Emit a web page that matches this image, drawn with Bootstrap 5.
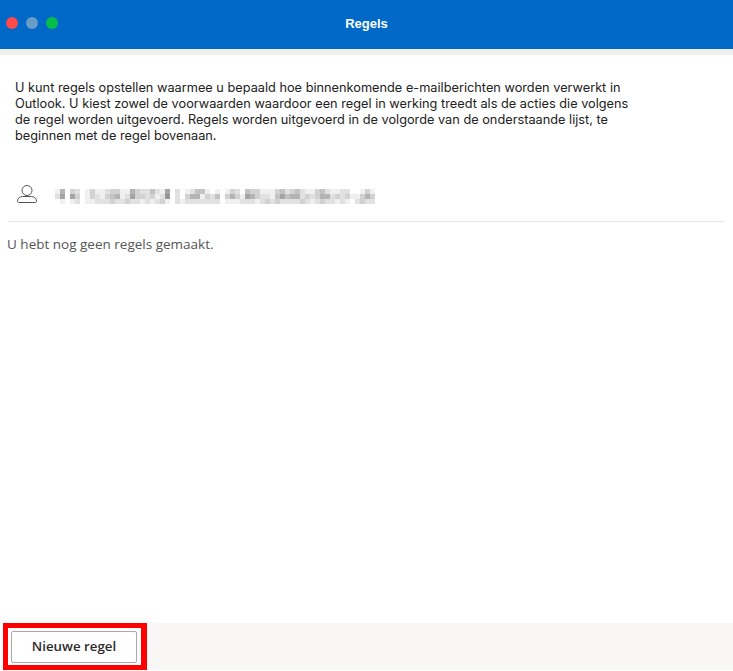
<!DOCTYPE html>
<html lang="nl">
<head>
<meta charset="utf-8">
<title>Regels</title>
<link href="https://cdn.jsdelivr.net/npm/bootstrap@5.3.0/dist/css/bootstrap.min.css" rel="stylesheet">
<style>
html,body{height:100%;background:#fff;overflow:hidden}
.win{height:671px}
.titlebar{height:49px;background:#0069c8;position:relative;padding-bottom:3px}
.dot-tl{width:12px;height:12px;border-radius:50%}
.tl-r{background:#fc4a4b}.tl-y{background:#6a9cc9}.tl-g{background:#06bf4b}
.tl-set{padding-left:6px;gap:8px}
.title-txt{font:700 13px/47px "Liberation Sans",sans-serif;color:#fff;position:absolute;left:0;right:0;top:0;text-align:center}
.strip{height:6px;background:#eeeeee}
.intro{font:400 12.75px/16px Inter,sans-serif;color:#222;padding:25px 0 0 15px;width:642px;margin:0}
.acct{height:55px;margin:23px 9px 0 8px;border-bottom:1px solid #e6e6e6;padding-left:9px;gap:18px}
.mosaic{display:block}
.empty{font:400 13.5px/16px "Open Sans",sans-serif;color:#555;padding:14px 0 0 7px;margin:0}
.bodyfill{min-height:0}
.foot{height:47px;margin-bottom:1px}
.foot-left{padding-left:3px;background:#fff}
.hl{border:solid #f00;border-width:5px 6px 5px 5px;width:144px;height:47px;padding:3px;background:#fff}
.new-btn{width:126px;height:32px;background:#fff;border:1px solid #aaa8a6;border-radius:2px;font:600 13.3px/1 "Open Sans",sans-serif;color:#2b2b2b;padding:0}
.foot-rest{background:#f8f7f6}
</style>
</head>
<body>
<div class="win d-flex flex-column">
  <div class="titlebar d-flex align-items-center tl-set flex-shrink-0">
    <span class="dot-tl tl-r"></span><span class="dot-tl tl-y"></span><span class="dot-tl tl-g"></span>
    <div class="title-txt">Regels</div>
  </div>
  <div class="strip flex-shrink-0"></div>
  <div class="bodyfill flex-grow-1">
    <p class="intro">U kunt regels opstellen waarmee u bepaald hoe binnenkomende e-mailberichten worden verwerkt in Outlook. U kiest zowel de voorwaarden waardoor een regel in werking treedt als de acties die volgens de regel worden uitgevoerd. Regels worden uitgevoerd in de volgorde van de onderstaande lijst, te beginnen met de regel bovenaan.</p>
    <div class="acct d-flex align-items-center">
      <svg width="20" height="18" viewBox="0 0 20 18" fill="none" stroke="#555" stroke-width="1"><circle cx="10" cy="5.500" r="5"/><path d="M.5 16c0-2.800 2.500-4.500 5-4.500h9c2.500 0 5 1.700 5 4.500 0 1-.6 1.500-1.500 1.500H2C1.100 17.500.5 17 .5 16z"/></svg>
      <svg class="mosaic" width="320" height="20" viewBox="0 0 320 20" shape-rendering="crispEdges" fill="#777">
        <g id="mz"></g>
      </svg>
    </div>
    <p class="empty">U hebt nog geen regels gemaakt.</p>
  </div>
  <div class="foot d-flex flex-shrink-0">
    <div class="foot-left"><div class="hl"><button type="button" class="new-btn d-block">Nieuwe regel</button></div></div>
    <div class="foot-rest flex-grow-1"></div>
  </div>
</div>
<script>
var rows=["1503201311233115322421602012441012","2606301321345126332312702035513225","0101201122232232212123102122222222"];
var tail=["10132043311134234211342112200131","40353165322146455232355232311353","20111222123232222321232212102322"];
var g=document.getElementById('mz'),s='';
rows.forEach(function(r,y){(r.slice(0,32)+tail[y]).split('').forEach(function(c,x){if(+c>0){s+='<rect x="'+x*5+'" y="'+(5+y*5)+'" width="5" height="5" opacity="'+(c*0.11)+'"/>';}});});
g.innerHTML=s;
</script>
<script src="https://cdn.jsdelivr.net/npm/bootstrap@5.3.0/dist/js/bootstrap.bundle.min.js"></script>
</body>
</html>
